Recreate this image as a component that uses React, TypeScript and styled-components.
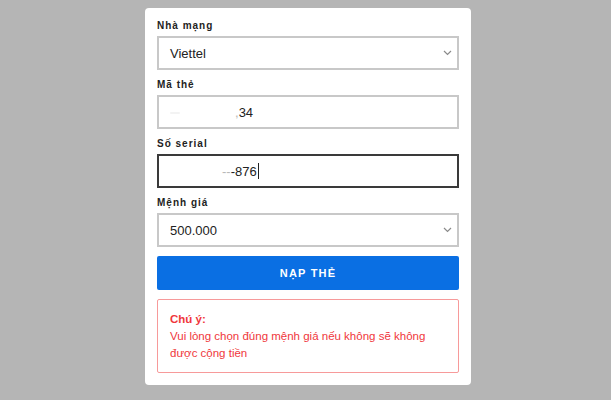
import React from "react";
import styled, { createGlobalStyle } from "styled-components";

const GlobalStyle = createGlobalStyle`
  html, body {
    margin: 0;
    padding: 0;
    background: #b5b5b5;
  }
  body {
    font-family: "Liberation Sans", Arial, sans-serif;
  }
`;

const Page = styled.div`
  width: 611px;
  height: 400px;
  display: flex;
  justify-content: center;
  padding-top: 8px;
  box-sizing: border-box;
`;

const Card = styled.div`
  width: 326px;
  height: 377px;
  box-sizing: border-box;
  margin-left: 5px;
  background: #ffffff;
  border-radius: 4px;
  padding: 11px 12px 12px;
  display: flex;
  flex-direction: column;
`;

const FieldGroup = styled.div`
  display: flex;
  flex-direction: column;
  margin-bottom: 8px;
`;

const Label = styled.div`
  font-size: 10px;
  font-weight: bold;
  letter-spacing: 1px;
  color: #222;
  height: 17px;
  line-height: 13px;
`;

const Box = styled.div<{ $focused?: boolean }>`
  position: relative;
  height: 34px;
  box-sizing: border-box;
  border: 2px solid ${(p) => (p.$focused ? "#3a3a3a" : "#c8c8c8")};
  display: flex;
  align-items: center;
  padding-left: 11px;
  font-size: 13px;
  color: #222;
  background: #fff;
`;

const Chevron = styled.svg`
  position: absolute;
  right: 5px;
  top: 12px;
`;

const Smudge = styled.span<{ $w: number }>`
  display: inline-block;
  width: ${(p) => p.$w}px;
  height: 2px;
  margin-top: 2px;
  background: #f3f3f3;
  border-radius: 2px;
`;

const Gap = styled.span<{ $w: number }>`
  display: inline-block;
  width: ${(p) => p.$w}px;
`;

const Faint = styled.span`
  color: #b8b8b8;
`;

const Caret = styled.span`
  display: inline-block;
  width: 1px;
  height: 16px;
  background: #222;
  margin-left: 1px;
`;

const SubmitButton = styled.button`
  height: 34px;
  border: none;
  border-radius: 2px;
  background: #0a6fe3;
  color: #fff;
  font-family: "Liberation Sans", Arial, sans-serif;
  font-size: 11px;
  font-weight: bold;
  letter-spacing: 1.2px;
  margin-top: 1px;
  margin-bottom: 9px;
`;

const Notice = styled.div`
  height: 74px;
  box-sizing: border-box;
  border: 1px solid #f79a9a;
  border-radius: 2px;
  padding: 11px 12px;
  color: #f0373c;
  font-size: 11.5px;
  line-height: 17px;
`;

const NoticeTitle = styled.div`
  font-weight: bold;
`;

const SelectArrow = () => (
  <Chevron width="9" height="6" viewBox="0 0 9 6">
    <path d="M1 1l3.5 3.5L8 1" fill="none" stroke="#8a8a8a" strokeWidth="1.2" />
  </Chevron>
);

export default function App() {
  return (
    <Page>
      <GlobalStyle />
      <Card>
        <FieldGroup>
          <Label>Nhà mạng</Label>
          <Box>
            Viettel
            <SelectArrow />
          </Box>
        </FieldGroup>
        <FieldGroup>
          <Label>Mã thẻ</Label>
          <Box>
            <Smudge $w={10} />
            <Gap $w={55} />
            <Faint>,</Faint>
            34
          </Box>
        </FieldGroup>
        <FieldGroup>
          <Label>Số serial</Label>
          <Box $focused>
            <Gap $w={52} />
            <Faint>--</Faint>
            -876
            <Caret />
          </Box>
        </FieldGroup>
        <FieldGroup>
          <Label>Mệnh giá</Label>
          <Box>
            500.000
            <SelectArrow />
          </Box>
        </FieldGroup>
        <SubmitButton>NẠP THẺ</SubmitButton>
        <Notice>
          <NoticeTitle>Chú ý:</NoticeTitle>
          Vui lòng chọn đúng mệnh giá nếu không sẽ không được cộng tiền
        </Notice>
      </Card>
    </Page>
  );
}
